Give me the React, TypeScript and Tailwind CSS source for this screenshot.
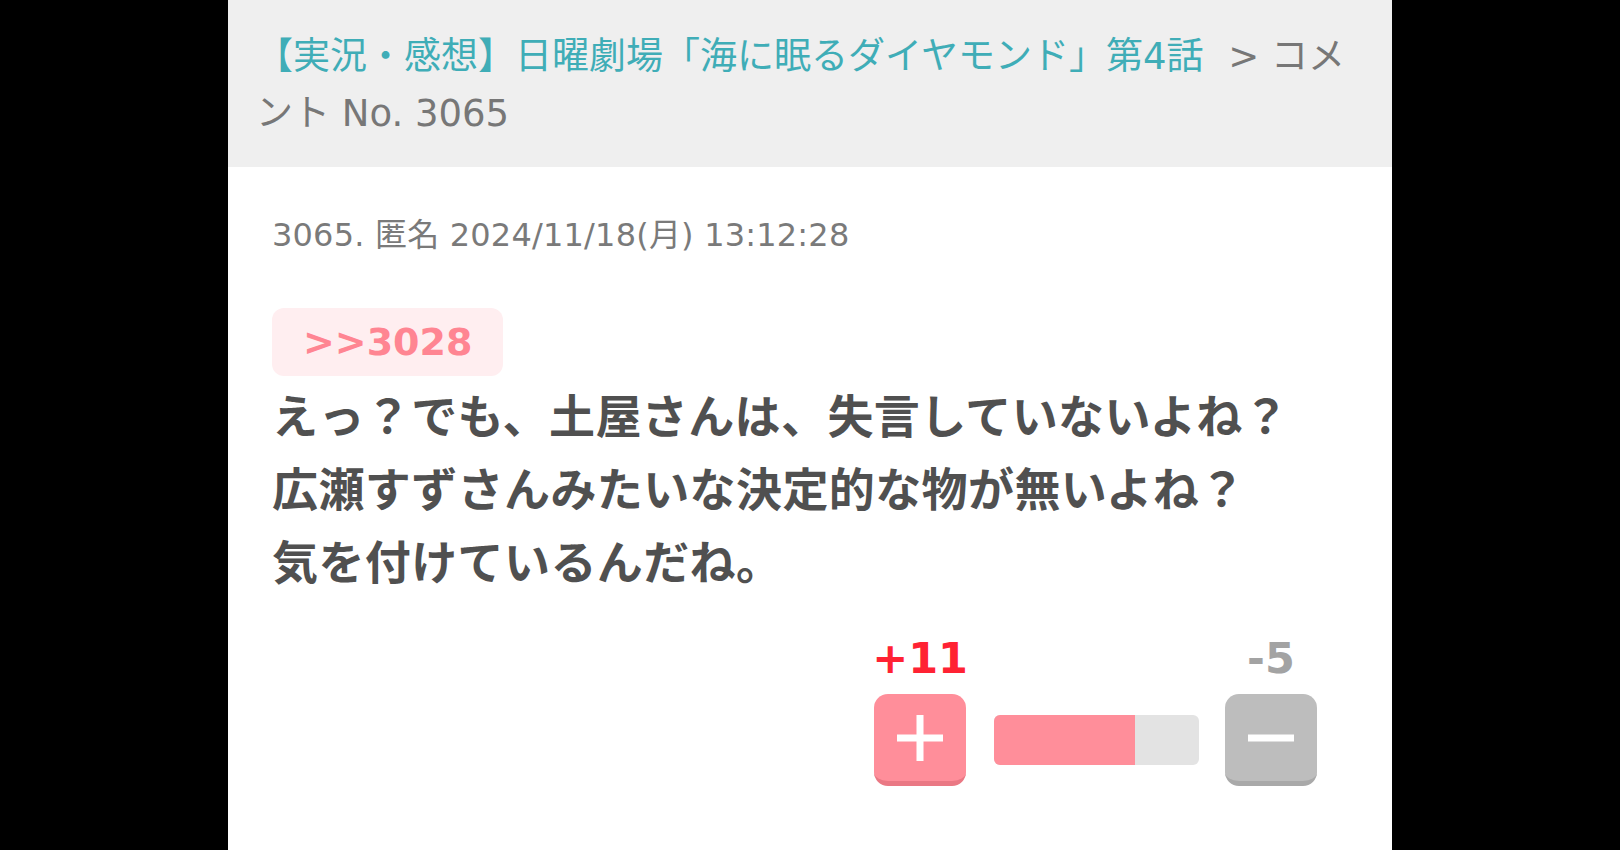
const font = { fontFamily: '"DejaVu Sans", "Noto Sans CJK JP", sans-serif' };

function PlusIcon() {
  return (
    <svg width="46" height="46" viewBox="0 0 46 46">
      <rect x="0" y="19.5" width="46" height="7" fill="#fff" />
      <rect x="19.5" y="0" width="7" height="46" fill="#fff" />
    </svg>
  );
}

function MinusIcon() {
  return (
    <svg width="46" height="8" viewBox="0 0 46 8">
      <rect x="0" y="0.5" width="46" height="7" fill="#fff" />
    </svg>
  );
}

export default function App() {
  const good = 11;
  const bad = 5;
  const ratio = (good / (good + bad)) * 100;

  return (
    <div className="w-full h-[850px] bg-black flex justify-center overflow-hidden" style={font}>
      <article className="w-[1164px] bg-white flex flex-col">
        <header className="bg-[#efefef] h-[167px] pl-[28px] pr-[28px] pt-[28px]">
          <p className="text-[37px] leading-[57px] text-[#777777]">
            <a className="text-[#3fadb7]">【実況・感想】日曜劇場「海に眠るダイヤモンド」第4話</a>
            <span> <span className="ml-[13px]">&gt;</span> コメント No. 3065</span>
          </p>
        </header>

        <section className="pl-[44px] pr-[44px] pt-[50px]">
          <p className="text-[32px] leading-[36px] text-[#7a7a7a] tracking-[0.2px]">3065. 匿名 2024/11/18(月) 13:12:28</p>

          <div className="mt-[55px] inline-flex items-center h-[68px] px-[31px] rounded-[12px] bg-[#ffeef0]">
            <span className="text-[38px] font-bold text-[#ff8592]">&gt;&gt;3028</span>
          </div>

          <p className="mt-[5px] text-[46px] leading-[73px] font-bold text-[#505050] tracking-[0.4px]">
            えっ？でも、土屋さんは、失言していないよね？
            <br />
            広瀬すずさんみたいな決定的な物が無いよね？
            <br />
            気を付けているんだね。
          </p>
        </section>

        <div className="flex justify-end items-end gap-[26px] pr-[75px] mt-[33px]">
          <div className="flex flex-col items-center">
            <span className="text-[43px] leading-[50px] font-bold text-[#ff2233]">+{good}</span>
            <button className="mt-[11px] w-[92px] h-[92px] rounded-[14px] bg-[#ff8e9a] border-b-[5px] border-[#ea7884] flex items-center justify-center">
              <PlusIcon />
            </button>
          </div>

          <div className="mb-[21px] w-[205px] h-[50px] rounded-[6px] bg-[#e3e3e3] overflow-hidden">
            <div className="h-full bg-[#ff8e9a]" style={{ width: `${ratio}%` }} />
          </div>

          <div className="flex flex-col items-center">
            <span className="text-[43px] leading-[50px] font-bold text-[#a3a3a3]">-{bad}</span>
            <button className="mt-[11px] w-[92px] h-[92px] rounded-[14px] bg-[#bdbdbd] border-b-[5px] border-[#a9a9a9] flex items-center justify-center">
              <MinusIcon />
            </button>
          </div>
        </div>
      </article>
    </div>
  );
}
